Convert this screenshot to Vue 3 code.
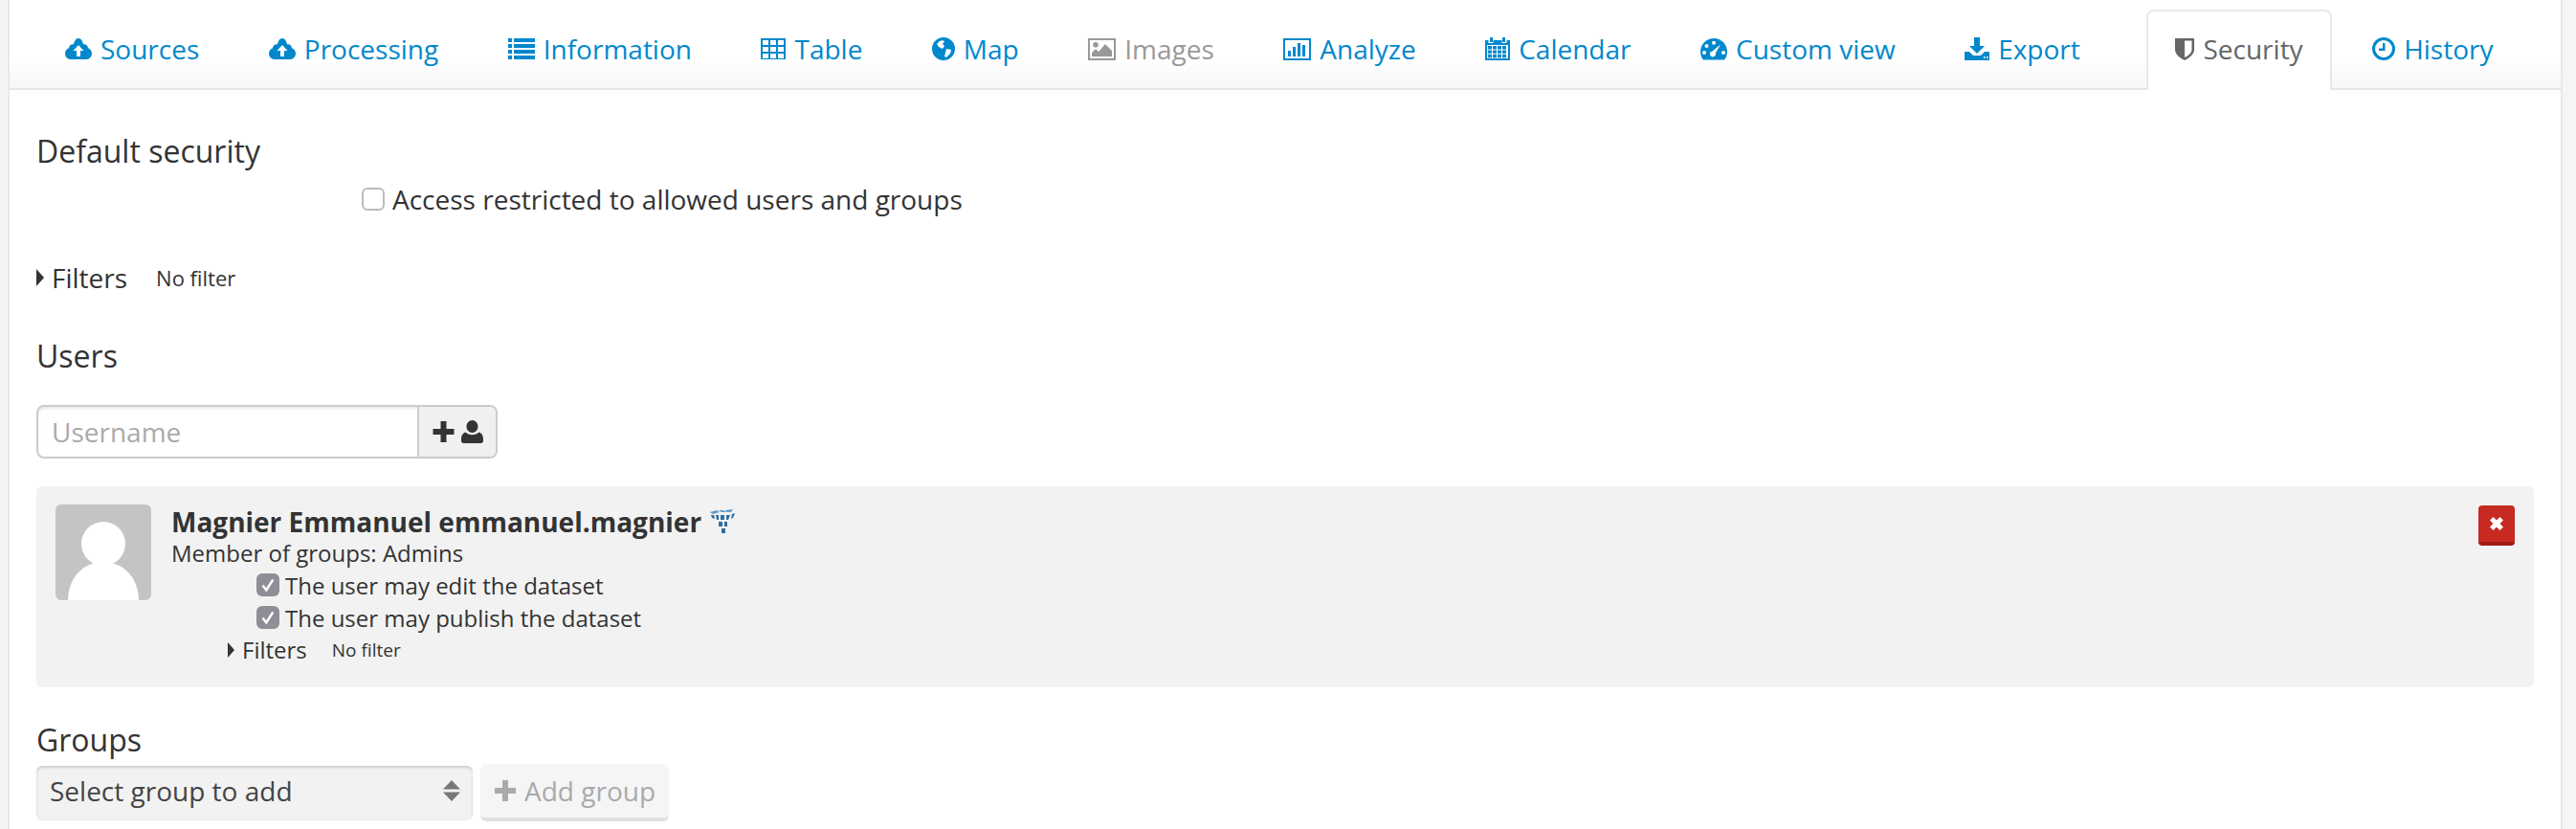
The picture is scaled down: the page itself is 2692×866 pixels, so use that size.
<template>
  <div class="page">
    <div class="main">
      <ul class="tabs">
        <li v-for="tab in tabs" :key="tab.label" class="tab" :class="{ active: tab.active, disabled: tab.disabled }">
          <svg class="tab-icon" :viewBox="`0 0 ${tab.w} 24`" :width="tab.w" height="24">
            <path :d="tab.d" fill="currentColor" fill-rule="evenodd" />
          </svg>
          <span>{{ tab.label }}</span>
        </li>
      </ul>

      <div class="content">
        <h3 class="title first">Default security</h3>
        <label class="restrict">
          <span class="check"></span>
          <span>Access restricted to allowed users and groups</span>
        </label>
        <div class="filters">
          <span class="caret"></span>
          <span>Filters</span>
          <small>No filter</small>
        </div>

        <h3 class="title users">Users</h3>
        <div class="user-add">
          <input class="user-input" type="text" placeholder="Username" />
          <button class="user-btn">
            <svg viewBox="0 0 53 24" width="53" height="24">
              <path :d="plusUser" fill="#333" />
            </svg>
          </button>
        </div>

        <div class="user-card">
          <div class="avatar">
            <svg viewBox="0 0 100 100" width="100" height="100">
              <circle cx="50" cy="41" r="23" fill="#fff" />
              <path d="M13 100C13 78 28 60 50 60S87 78 87 100Z" fill="#fff" />
            </svg>
          </div>
          <div class="user-body">
            <div class="user-name">
              <b>{{ user.name }} {{ user.login }}</b>
              <svg class="cube" viewBox="0 0 28 25" width="28" height="25">
                <path d="M1 3l7-2 3 2-7 2zM10 1l5 0 3 2-5 0zM17 1l8-1-2 3-5 0z" fill="#5e9cc6" />
                <path d="M2 6l3 0 1 4-3-1zM7 6l3 0 0 5-2 0zM12 6l4 0 0 5-4 0zM18 6l4 0-2 5-2 0zM24 5l3-1-2 5-2 1zM10 13l4 0 0 5-4 0zM16 13l3 0 0 5-3 0zM13 20l4 0 0 5-4 0z" fill="#2e6fa3" />
              </svg>
            </div>
            <div class="user-groups">Member of groups: {{ user.groups }}</div>
            <label v-for="perm in user.perms" :key="perm" class="perm">
              <span class="check checked">
                <svg viewBox="0 0 24 24" width="24" height="24">
                  <path d="M6.5 12.5l3.8 5 7-11" fill="none" stroke="#fff" stroke-width="2.4" />
                </svg>
              </span>
              <span>{{ perm }}</span>
            </label>
            <div class="filters inner">
              <span class="caret"></span>
              <span>Filters</span>
              <small>No filter</small>
            </div>
          </div>
          <button class="remove">
            <svg viewBox="0 0 14 14" width="14" height="14">
              <path d="M0 3.500L3.500 0 7 3.500 10.500 0 14 3.500 10.500 7 14 10.500 10.500 14 7 10.500 3.500 14 0 10.500 3.500 7Z" fill="#fff" />
            </svg>
          </button>
        </div>

        <h3 class="title groups">Groups</h3>
        <div class="group-add">
          <div class="group-select">
            <span>Select group to add</span>
            <svg viewBox="0 0 20 24" width="20" height="24">
              <path d="M10 1L19 10.500H1ZM1 13.500H19L10 23Z" fill="#777" />
            </svg>
          </div>
          <button class="group-btn">
            <svg viewBox="0 0 24 24" width="24" height="24">
              <path d="M9 1h6v8h8v6h-8v8H9v-8H1V9h8Z" fill="currentColor" />
            </svg>
            <span>Add group</span>
          </button>
        </div>
      </div>
    </div>
  </div>
</template>

<script setup>
// petits rectangles pour les icônes en grille
const rects = (list) => list.map(([x, y, w, h]) => `M${x} ${y}h${w}v${h}h-${w}z`).join('')

const grid = (x0, y0, cols, rows, w, h, gap) => {
  const out = []
  for (let r = 0; r < rows; r++) {
    for (let c = 0; c < cols; c++) {
      out.push([x0 + c * (w + gap), y0 + r * (h + gap), w, h])
    }
  }
  return rects(out)
}

const cloud = 'M6 23C2.7 23 0 20.3 0 17C0 14.3 1.6 12 4 11.2C4.2 8.8 6 7.2 8 7.2C8.4 7.2 8.7 7.2 9 7.3C9.6 4 11.4 1 14 1C16.6 1 18.4 4 19 7.3C19.3 7.2 19.6 7.2 20 7.2C22 7.2 23.8 8.8 24 11.2C26.4 12 28 14.3 28 17C28 20.3 25.3 23 22 23ZM14 8L8.5 14H12V20H16V14H19.5Z'

const tabs = [
  { label: 'Sources', w: 28, d: cloud },
  { label: 'Processing', w: 28, d: cloud },
  { label: 'Information', w: 28, d: rects([[0, 1, 4, 4], [6, 1, 22, 4], [0, 7, 4, 4], [6, 7, 22, 4], [0, 13, 4, 4], [6, 13, 22, 4], [0, 19, 4, 4], [6, 19, 22, 4]]) },
  { label: 'Table', w: 26, d: rects([[0, 1, 26, 22]]) + grid(2, 3, 3, 3, 6, 5, 2) },
  { label: 'Map', w: 24, d: 'M12 0A12 12 0 1 0 12 24A12 12 0 1 0 12 0ZM8 4C10 3 12 3 13 4L11 7L13 9L11 12L7 10L5 7ZM15 12L20 13L19 17L15 21L13 20L14 16Z' },
  { label: 'Images', w: 29, disabled: true, d: rects([[0, 1, 29, 23]]) + rects([[2, 3, 25, 19]]) + 'M8 5A2.8 2.8 0 1 0 8 10.6A2.8 2.8 0 1 0 8 5ZM4 20V16L8 12L11 15L18 7L25 14V20Z' },
  { label: 'Analyze', w: 29, d: rects([[0, 1, 29, 23]]) + rects([[2, 3, 25, 19]]) + rects([[5, 14, 3, 6], [10, 10, 3, 10], [15, 6, 3, 14], [20, 8, 3, 12]]) },
  { label: 'Calendar', w: 26, d: 'M5 0h3v5h-3zM18 0h3v5h-3zM0 3h3.5v3h5V3h9v3h5V3H26V24H0ZM2 8v14h22V8Z' + grid(3, 9, 4, 3, 4, 3.4, 1) },
  { label: 'Custom view', w: 28, d: 'M14 1C6.3 1 0 7.3 0 15C0 18.2 1.1 21.2 3 23.5H25C26.9 21.2 28 18.2 28 15C28 7.3 21.7 1 14 1ZM14 3.8A2 2 0 1 1 14 7.8A2 2 0 1 1 14 3.8ZM6.5 7A2 2 0 1 1 6.5 11A2 2 0 1 1 6.5 7ZM4 14A2 2 0 1 1 4 18A2 2 0 1 1 4 14ZM21 7.5L15.8 16.5A3 3 0 1 1 12.5 14.4ZM24 14A2 2 0 1 1 24 18A2 2 0 1 1 24 14Z' },
  { label: 'Export', w: 26, d: 'M10 0h6v9h5L13 17L5 9h5ZM0 15h5l4 4h8l4-4h5V24H0ZM20 20v2h1.5v-2ZM23 20v2h1.5v-2Z' },
  { label: 'Security', w: 20, active: true, d: 'M0 1H20V13C20 18 14 22 10 24C6 22 0 18 0 13ZM10 3.5V21C13 19.5 17.5 16.5 17.5 13V3.5Z' },
  { label: 'History', w: 24, d: 'M12 0A12 12 0 1 0 12 24A12 12 0 1 0 12 0ZM12 3A9 9 0 1 1 12 21A9 9 0 1 1 12 3ZM11 6H13.5V14H7V11.5H11Z' }
]

const plusUser = 'M8.500 1h6v8h8v6h-8v8h-6v-8h-8V9h8ZM41.500 0C45 0 47.500 3 47.500 6.500C47.500 10 45 13 41.500 13C38 13 35.500 10 35.500 6.500C35.500 3 38 0 41.500 0ZM34.500 12.500C36.500 14.500 38.500 15.200 41.500 15.200C44.500 15.200 46.500 14.500 48.500 12.500C52 13.500 53 17 53 20V21.500C53 23 52 24 50.500 24H32.500C31 24 30 23 30 21.500V20C30 17 31 13.500 34.500 12.500Z'

const user = {
  name: 'Magnier Emmanuel',
  login: 'emmanuel.magnier',
  groups: 'Admins',
  perms: ['The user may edit the dataset', 'The user may publish the dataset']
}
</script>

<style>
html, body {
  margin: 0;
  background: #f5f5f5;
}
</style>

<style scoped>
.page {
  height: 866px;
  overflow: hidden;
  padding: 0 14px 0 8px;
  font-family: "Open Sans", "Noto Sans", sans-serif;
  font-size: 28px;
  color: #333;
}

.main {
  height: 866px;
  background: #fff;
  border-left: 2px solid #e8e8e8;
  border-right: 2px solid #e8e8e8;
}

.tabs {
  display: flex;
  align-items: flex-end;
  height: 92px;
  margin: 0;
  padding: 0 28px 0 28px;
  list-style: none;
  border-bottom: 2px solid #e6e6e6;
  background: linear-gradient(#fff 60px, #f7f7f7 92px);
}

.tab {
  display: flex;
  flex: none;
  align-items: center;
  gap: 9px;
  height: 82px;
  padding: 0 28px 6px;
  margin: 0 12.5px -2px 0;
  box-sizing: border-box;
  border: 2px solid transparent;
  border-bottom: 0;
  color: #0088cc;
  white-space: nowrap;
}

.tab.disabled {
  color: #999;
}

.tab.active {
  height: 84px;
  margin-left: auto;
  padding-bottom: 4px;
  color: #666;
  background: #fff;
  border-color: #e8e8e8;
  border-radius: 8px 8px 0 0;
}

.tab-icon {
  flex: none;
}

.content {
  padding: 0 28px;
}

.title {
  margin: 0;
  font-size: 32px;
  font-weight: 400;
  line-height: 44px;
}

.title.first {
  margin-top: 42px;
}

.restrict {
  display: flex;
  align-items: center;
  gap: 8px;
  margin: 8px 0 0 340px;
  line-height: 40px;
}

.check {
  flex: none;
  width: 24px;
  height: 24px;
  box-sizing: border-box;
  border: 2px solid #bbb;
  border-radius: 6px;
  background: #fff;
}

.check.checked {
  background: #8e8e96;
  border: 0;
}

.check svg {
  display: block;
}

.filters {
  display: flex;
  align-items: center;
  margin-top: 42px;
  line-height: 40px;
}

.caret {
  width: 0;
  height: 0;
  margin-right: 8px;
  border-left: 8px solid #333;
  border-top: 9px solid transparent;
  border-bottom: 9px solid transparent;
}

.filters small {
  margin-left: 30px;
  font-size: 22px;
}

.title.users {
  margin-top: 40px;
}

.user-add {
  display: flex;
  width: 482px;
  height: 56px;
  margin-top: 29px;
  box-sizing: border-box;
  border: 2px solid #ccc;
  border-radius: 8px;
  overflow: hidden;
  box-shadow: inset 0 2px 3px rgba(0, 0, 0, 0.1);
}

.user-input {
  flex: 1;
  min-width: 0;
  padding: 0 14px;
  border: 0;
  outline: 0;
  background: transparent;
  font: inherit;
  color: #333;
}

.user-input::placeholder {
  color: #aaa;
}

.user-btn {
  width: 82px;
  padding: 0;
  border: 0;
  border-left: 2px solid #ccc;
  background: #f0f0f0;
}

.user-btn svg {
  display: block;
  margin: 0 auto;
}

.user-card {
  display: flex;
  align-items: flex-start;
  height: 210px;
  margin-top: 29px;
  padding: 19px 20px 0;
  box-sizing: border-box;
  background: #f2f2f2;
  border-radius: 6px;
}

.avatar {
  flex: none;
  width: 100px;
  height: 100px;
  background: #c4c4c4;
  border-radius: 6px;
  overflow: hidden;
}

.avatar svg {
  display: block;
}

.user-body {
  flex: 1;
  margin-left: 21px;
}

.user-name {
  display: flex;
  align-items: center;
  height: 35px;
}

.cube {
  margin-left: 8px;
}

.user-groups {
  font-size: 24px;
  line-height: 32px;
}

.perm {
  display: flex;
  align-items: center;
  gap: 6px;
  height: 34px;
  margin-left: 89px;
  font-size: 24px;
}

.filters.inner {
  margin: 0 0 0 59px;
  font-size: 24px;
  line-height: 34px;
}

.filters.inner .caret {
  border-left-width: 7px;
  border-top-width: 8px;
  border-bottom-width: 8px;
}

.filters.inner small {
  margin-left: 26px;
  font-size: 19px;
}

.remove {
  flex: none;
  width: 38px;
  height: 42px;
  margin-top: 1px;
  padding: 0;
  border: 0;
  border-bottom: 4px solid #a11d17;
  border-radius: 4px;
  background: #c62a22;
}

.remove svg {
  display: block;
  margin: 0 auto;
}

.title.groups {
  margin-top: 33px;
}

.group-add {
  display: flex;
  align-items: center;
  gap: 8px;
  margin-top: 3px;
}

.group-select {
  display: flex;
  align-items: center;
  justify-content: space-between;
  width: 456px;
  height: 56px;
  padding: 0 12px 4px 14px;
  box-sizing: border-box;
  border-radius: 6px;
  background: #f2f2f2;
  color: #444;
  box-shadow: inset 0 2px 3px rgba(0, 0, 0, 0.15), 0 1px 1px rgba(0, 0, 0, 0.08);
}

.group-btn {
  display: flex;
  align-items: center;
  gap: 8px;
  height: 60px;
  padding: 0 14px;
  box-sizing: border-box;
  border: 0;
  border-bottom: 4px solid #e0e0e0;
  border-radius: 6px;
  background: #f5f5f5;
  font: inherit;
  color: #aaa;
}
</style>
